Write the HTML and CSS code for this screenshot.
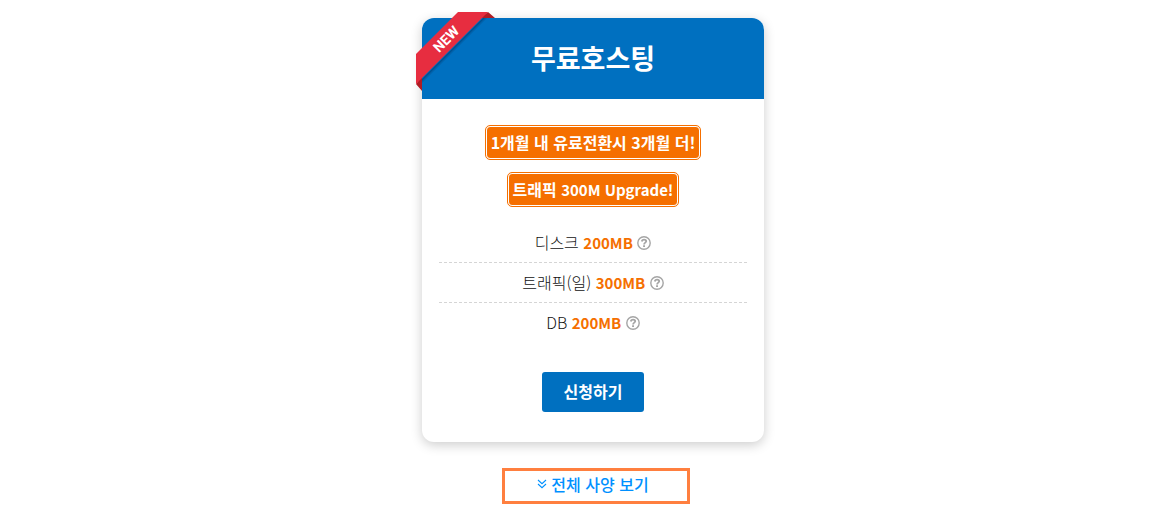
FILE: index.html
```html
<!DOCTYPE html>
<html lang="ko">
<head>
    <meta charset="UTF-8">
    <meta name="viewport" content="width=device-width, initial-scale=1.0">
    <title>무료호스팅</title>
    <link rel="stylesheet" href="styles.css">
</head>
<body>
    <svg class="sprite" width="0" height="0" aria-hidden="true">
        <symbol id="icon-help" viewBox="0 0 14 14">
            <circle cx="7" cy="7" r="6.2" fill="none" stroke="currentColor" stroke-width="1.4"/>
            <path d="M4.8 5.5C5 4.2 5.9 3.7 7.1 3.7C8.3 3.7 9.2 4.3 9.2 5.3C9.2 6.7 7.1 6.6 7.1 8.4" fill="none" stroke="currentColor" stroke-width="1.8"/>
            <path d="M6.1 9.2H8V11H6.1Z" fill="currentColor"/>
        </symbol>
    </svg>

    <main class="hosting">
        <section class="card">
            <svg class="ribbon" viewBox="0 0 80 80" role="img" aria-label="NEW">
                <path d="M72 0L79 6H64ZM0 72L6 79V64Z" fill="#b01c24"/>
                <path d="M67 6L6 67V69L69 6Z" fill="#003a70" opacity="0.6"/>
                <path d="M69 6L6 69V71L71 6Z" fill="#003a70" opacity="0.25"/>
                <path d="M42 0H72L0 72V42Z" fill="#e72d40"/>
                <text class="ribbon-text" x="30" y="32" transform="rotate(-45 30 27)">NEW</text>
            </svg>
            <h1 class="card-title">무료호스팅</h1>
            <div class="card-body">
                <div class="badges">
                    <strong class="badge">1개월 내 유료전환시 3개월 더!</strong>
                    <strong class="badge">트래픽 <span class="latin">300M Upgrade!</span></strong>
                </div>
                <ul class="specs">
                    <li>디스크 <strong class="latin">200MB</strong> <button type="button" class="help" aria-label="디스크 도움말"><svg><use href="#icon-help"/></svg></button></li>
                    <li>트래픽(일) <strong class="latin">300MB</strong> <button type="button" class="help" aria-label="트래픽 도움말"><svg><use href="#icon-help"/></svg></button></li>
                    <li>DB <strong class="latin">200MB</strong> <button type="button" class="help" aria-label="DB 도움말"><svg><use href="#icon-help"/></svg></button></li>
                </ul>
                <button type="button" class="apply">신청하기</button>
            </div>
        </section>

        <a class="more" href="#">
            <svg viewBox="0 0 10 10" aria-hidden="true">
                <path d="M1 1L5 4.7L9 1M1 5L5 8.7L9 5" fill="none" stroke="currentColor" stroke-width="1.1"/>
            </svg>
            전체 사양 보기
        </a>
    </main>
</body>
</html>
```
FILE: styles.css
```css
* {
    margin: 0;
    padding: 0;
    box-sizing: border-box;
}

body {
    background: #fff;
    color: #111;
    font-family: "Noto Sans CJK KR", sans-serif;
    font-size: 16px;
    line-height: 24px;
}

button {
    font: inherit;
    border: none;
    cursor: pointer;
}

.sprite {
    position: absolute;
}

.hosting {
    display: flex;
    flex-direction: column;
    align-items: center;
    padding: 18px 0 10px 17px;
}

.card {
    position: relative;
    width: 100%;
    max-width: 342px;
    border-radius: 12px;
    box-shadow: 0 3px 12px rgba(0, 0, 0, 0.2);
}

.ribbon {
    position: absolute;
    top: -6px;
    left: -6px;
    width: 80px;
    height: 80px;
}

.ribbon-text {
    fill: #fff;
    font-family: Roboto, sans-serif;
    font-size: 14px;
    font-weight: 700;
    text-anchor: middle;
}

.card-title {
    padding: 20px 16px 21px;
    border-radius: 12px 12px 0 0;
    background: #0070c0;
    color: #fff;
    font-size: 27px;
    font-weight: 700;
    line-height: 40px;
    text-align: center;
}

.card-body {
    display: flex;
    flex-direction: column;
    align-items: center;
    padding: 26px 17px 30px;
}

.badges {
    display: flex;
    flex-direction: column;
    align-items: center;
    gap: 12px;
}

.badge {
    margin: 1px;
    padding: 3px 4px;
    border: 1px solid #fff;
    border-radius: 4px;
    outline: 1px solid #f56f00;
    background: #f56f00;
    color: #fff;
    line-height: 25px;
}

.latin {
    font-size: 15px;
    line-height: 20px;
}

.specs {
    width: 100%;
    margin-top: 16px;
    list-style: none;
    text-align: center;
}

.specs li {
    padding: 7px 0 8px;
    border-bottom: 1px dashed #d5d5d5;
    font-weight: 300;
}

.specs li:last-child {
    border-bottom: none;
}

.specs strong {
    color: #f56f00;
    font-weight: 700;
}

.help {
    width: 14px;
    height: 14px;
    background: none;
    color: #a5a5a5;
    line-height: 14px;
    vertical-align: -1px;
}

.help svg {
    display: block;
    width: 14px;
    height: 14px;
}

.apply {
    margin-top: 30px;
    padding: 7px 22px 9px;
    border-radius: 3px;
    background: #0070c0;
    color: #fff;
    font-weight: 700;
}

.more {
    display: flex;
    justify-content: center;
    align-items: center;
    gap: 4px;
    width: 188px;
    margin: 26px 0 0 6px;
    padding: 1px 6px 5px 0;
    border: 3px solid #ff7f3f;
    color: #0090ff;
    font-weight: 500;
    text-decoration: none;
}

.more svg {
    width: 10px;
    height: 10px;
}
```
